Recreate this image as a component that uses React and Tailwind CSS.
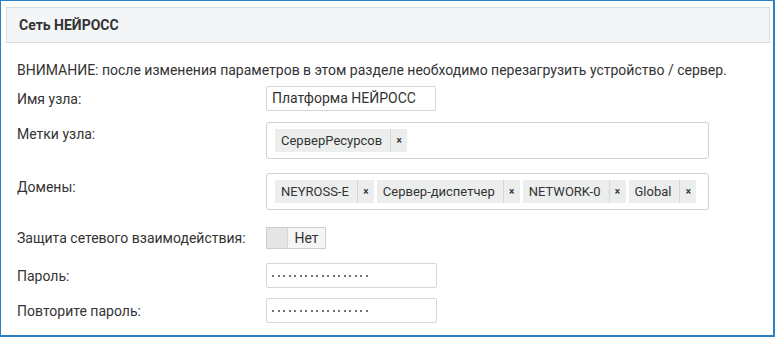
const labelCls = 'w-[249px] shrink-0 text-[14px] leading-[18px] text-[#333]'

const Tag = ({ text }) => (
  <div className="flex h-[23px] items-stretch bg-[#eceeee] text-[13px] text-[#333]">
    <span className="flex items-center pl-[6px] pr-[8px]">{text}</span>
    <span className="flex w-[17px] items-center justify-center border-l border-[#d4d6d6] text-[10px] font-bold text-[#333]">
      ×
    </span>
  </div>
)

const Mask = () => (
  <div className="flex gap-[3.5px] pl-[5px]">
    {Array.from({ length: 18 }).map((_, i) => (
      <span key={i} className="h-[2px] w-[2px] bg-[#6e737b]" />
    ))}
  </div>
)

const TagBox = ({ tags }) => (
  <div className="flex h-[37px] w-[443px] items-center gap-[3px] rounded-[3px] border border-[#d3d0d0] px-[8px]">
    {tags.map((t) => (
      <Tag key={t} text={t} />
    ))}
  </div>
)

export default function App() {
  return (
    <div
      className="h-[337px] w-[775px] border-t border-l border-r-2 border-b-2 border-[#2a80c3] bg-white pt-[6px] pl-[5px] pr-[4px]"
      style={{ fontFamily: 'Roboto, "Liberation Sans", sans-serif' }}
    >
      <div className="flex h-[36px] w-[764px] items-center border border-[#d8dcdf] bg-[#f3f5f6] pl-[12px] text-[14px] font-bold text-[#333]">
        Сеть НЕЙРОСС
      </div>

      <div className="pl-[11px]">
        <p className="mt-[18px] text-[14px] leading-[18px] text-[#333]">
          ВНИМАНИЕ: после изменения параметров в этом разделе необходимо перезагрузить устройство / сервер.
        </p>

        <div className="mt-[7px] flex items-center">
          <span className={labelCls}>Имя узла:</span>
          <div className="flex h-[25px] w-[170px] items-center rounded-[2px] border border-[#d6d6d6] pl-[5px] text-[14px] text-[#333]">
            Платформа НЕЙРОСС
          </div>
        </div>

        <div className="mt-[11px] flex items-start">
          <span className={labelCls + ' pt-[3px]'}>Метки узла:</span>
          <TagBox tags={['СерверРесурсов']} />
        </div>

        <div className="mt-[14px] flex items-start">
          <span className={labelCls + ' pt-[5px]'}>Домены:</span>
          <TagBox tags={['NEYROSS-E', 'Сервер-диспетчер', 'NETWORK-0', 'Global']} />
        </div>

        <div className="mt-[17px] flex items-center">
          <span className={labelCls}>Защита сетевого взаимодействия:</span>
          <div className="flex h-[22px] w-[60px] border border-[#cfcfcf]">
            <span className="w-[21px] border-r border-[#d8d8d8] bg-[#e4e5e5]" />
            <span className="flex flex-1 items-center justify-center bg-[#f5f5f5] text-[14px] text-[#333]">
              Нет
            </span>
          </div>
        </div>

        <div className="mt-[14px] flex items-center">
          <span className={labelCls}>Пароль:</span>
          <div className="flex h-[25px] w-[171px] items-center rounded-[2px] border border-[#d6d6d6]">
            <Mask />
          </div>
        </div>

        <div className="mt-[10px] flex items-center">
          <span className={labelCls}>Повторите пароль:</span>
          <div className="flex h-[25px] w-[171px] items-center rounded-[2px] border border-[#d6d6d6]">
            <Mask />
          </div>
        </div>
      </div>
    </div>
  )
}
